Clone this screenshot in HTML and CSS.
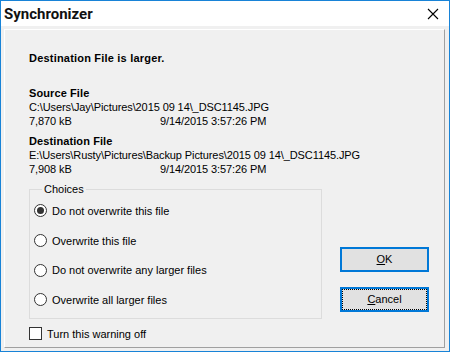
FILE: index.html
```html
<!DOCTYPE html>
<html>
<head>
<meta charset="utf-8">
<link rel="stylesheet" href="styles.css">
</head>
<body>
<div class="window">
  <div class="titlebar">
    <span class="title">Synchronizer</span>
    <svg class="close" width="12" height="12" viewBox="0 0 12 12"><path d="M1 1L11 11M11 1L1 11" stroke="#000" stroke-width="1.1" fill="none"/></svg>
  </div>
  <div class="frame">
    <div class="panel">
      <div class="heading">Destination File is larger.</div>
      <div class="file first">
        <div class="label">Source File</div>
        <div class="path">C:\Users\Jay\Pictures\2015 09 14\_DSC1145.JPG</div>
        <div class="meta"><span>7,870 kB</span><span>9/14/2015 3:57:26 PM</span></div>
      </div>
      <div class="file second">
        <div class="label">Destination File</div>
        <div class="path">E:\Users\Rusty\Pictures\Backup Pictures\2015 09 14\_DSC1145.JPG</div>
        <div class="meta"><span>7,908 kB</span><span>9/14/2015 3:57:26 PM</span></div>
      </div>
      <div class="lower">
        <fieldset class="choices">
          <legend>Choices</legend>
          <div class="radio-row"><span class="radio checked"><span class="dot"></span></span>Do not overwrite this file</div>
          <div class="radio-row"><span class="radio"></span>Overwrite this file</div>
          <div class="radio-row"><span class="radio"></span>Do not overwrite any larger files</div>
          <div class="radio-row"><span class="radio"></span>Overwrite all larger files</div>
        </fieldset>
        <div class="buttons">
          <div class="btn"><u>O</u>K</div>
          <div class="btn focus"><u>C</u>ancel</div>
        </div>
      </div>
      <div class="check-row"><span class="checkbox"></span>Turn this warning off</div>
    </div>
  </div>
</div>
</body>
</html>
```

FILE: styles.css
```css
html, body {
  margin: 0;
  padding: 0;
  background: #f0f0f0;
}
.window {
  width: 450px;
  height: 352px;
  box-sizing: border-box;
  border: 1px solid #1883d7;
  background: #f0f0f0;
  display: flex;
  flex-direction: column;
  font-family: "Liberation Sans", Arial, sans-serif;
  font-size: 11px;
  color: #000;
}
.titlebar {
  height: 25px;
  flex: none;
  background: #fff;
  display: flex;
  align-items: center;
  justify-content: space-between;
  padding: 0 10px 0 3px;
}
.title {
  font-family: Roboto, "Open Sans", sans-serif;
  font-weight: 700;
  font-size: 15px;
  color: #111;
  margin-top: 1px;
}
.close {
  margin-top: 1px;
}
.frame {
  flex: 1;
  padding: 3px 4px 3px 3px;
  display: flex;
}
.panel {
  flex: 1;
  border: 1px solid;
  border-color: #fff #a0a0a0 #a0a0a0 #fff;
  padding: 21px 0 0 24px;
  display: flex;
  flex-direction: column;
}
.heading {
  font-weight: bold;
  line-height: 14px;
  letter-spacing: 0.2px;
}
.file .label {
  font-weight: bold;
  line-height: 13px;
  letter-spacing: 0.1px;
}
.file .path, .file .meta {
  line-height: 14px;
  letter-spacing: -0.1px;
}
.file.first {
  margin-top: 22px;
}
.file.second {
  margin-top: 7px;
}
.meta {
  display: grid;
  grid-template-columns: 131px auto;
}
.lower {
  display: flex;
  margin-top: 6px;
  gap: 18px;
}
.choices {
  width: 293px;
  box-sizing: border-box;
  margin: 0;
  padding: 0 0 3px 4px;
  border: 1px solid #dcdcdc;
  min-width: 0;
}
.choices legend {
  margin-left: 8px;
  padding: 0 2px;
  line-height: 14px;
}
.radio-row {
  height: 29.7px;
  display: flex;
  align-items: center;
  gap: 5px;
}
.radio {
  width: 13px;
  height: 13px;
  box-sizing: border-box;
  border: 1px solid #333;
  border-radius: 50%;
  background: #fff;
  display: flex;
  align-items: center;
  justify-content: center;
}
.radio .dot {
  width: 7px;
  height: 7px;
  border-radius: 50%;
  background: #333;
}
.buttons {
  align-self: flex-end;
  margin-bottom: 7px;
  display: flex;
  flex-direction: column;
  gap: 15px;
}
.btn {
  position: relative;
  width: 89px;
  height: 25px;
  box-sizing: border-box;
  border: 2px solid #0078d7;
  background: #e1e1e1;
  display: flex;
  align-items: center;
  justify-content: center;
  line-height: 14px;
}
.btn.focus::after {
  content: "";
  position: absolute;
  inset: 0;
  border: 1px dotted #000;
}
.check-row {
  margin-top: 8px;
  display: flex;
  align-items: center;
  gap: 5px;
  line-height: 14px;
}
.checkbox {
  width: 13px;
  height: 13px;
  box-sizing: border-box;
  border: 1px solid #333;
  background: #fff;
}
```
